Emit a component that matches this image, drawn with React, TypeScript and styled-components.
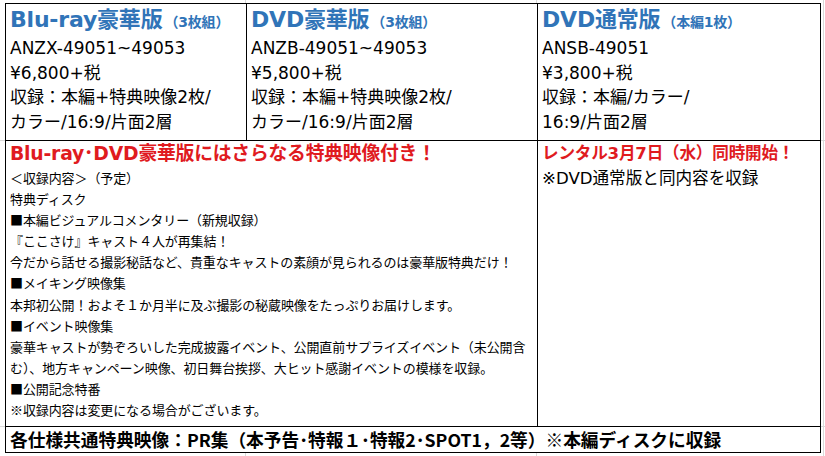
import React from 'react';
import styled, { createGlobalStyle } from 'styled-components';

const GlobalStyle = createGlobalStyle`
    html, body {
        margin: 0;
        padding: 0;
        background: #fff;
    }
`;

const grid = '#d9d9d9';

const Page = styled.div`
    width: 825px;
    height: 456px;
    box-sizing: border-box;
    padding: 3px 0 0 5px;
    overflow: hidden;
    background:
        linear-gradient(${grid}, ${grid}) 245px 0 / 1px 100% no-repeat,
        linear-gradient(${grid}, ${grid}) 536px 0 / 1px 100% no-repeat,
        linear-gradient(${grid}, ${grid}) 823px 0 / 1px 100% no-repeat,
        linear-gradient(${grid}, ${grid}) 0 140px / 100% 1px no-repeat,
        linear-gradient(${grid}, ${grid}) 0 426px / 100% 1px no-repeat,
        #fff;
`;

const Sheet = styled.div`
    display: grid;
    grid-template-columns: 240px 290px 282px;
    grid-template-rows: 136px 285px 25px;
    gap: 1px;
    width: 816px;
    padding: 1px;
    box-sizing: border-box;
    background: #000;
`;

const Cell = styled.div<{ $span?: number }>`
    grid-column: span ${(p) => p.$span ?? 1};
    background: #fff;
    padding: 0 4px;
    overflow: hidden;
    white-space: nowrap;
    color: #000;
`;

const EditionTitle = styled.div`
    height: 32px;
    line-height: 32px;
    font-family: "DejaVu Sans", "Noto Sans CJK JP", sans-serif;
    font-weight: bold;
    font-size: 22px;
    color: #3074b8;
    letter-spacing: -0.2px;
`;

const TitleNote = styled.span`
    font-size: 14px;
    margin-left: 2px;
`;

const SpecLine = styled.div`
    height: 24.5px;
    line-height: 24.5px;
    font-family: "DejaVu Sans", "Noto Sans CJK JP", sans-serif;
    font-size: 17px;
`;

const NoticeHeading = styled.div<{ $size: number }>`
    height: 26px;
    line-height: 26px;
    font-family: "DejaVu Sans", "Noto Sans CJK JP", sans-serif;
    font-weight: bold;
    font-size: ${(p) => p.$size}px;
    color: #e01b1f;
    letter-spacing: -0.2px;
`;

const DetailLine = styled.div`
    height: 21.1px;
    line-height: 21.1px;
    font-family: "Noto Sans CJK JP", sans-serif;
    font-size: 13px;
    letter-spacing: -0.1px;
`;

const RentalLine = styled.div`
    height: 24px;
    line-height: 24px;
    font-family: "DejaVu Sans", "Noto Sans CJK JP", sans-serif;
    font-size: 16.6px;
`;

const CommonNote = styled.div`
    height: 25px;
    line-height: 25px;
    font-family: "Noto Sans CJK JP", sans-serif;
    font-weight: bold;
    font-size: 17.7px;
`;

type Edition = {
    name: string;
    note: string;
    lines: string[];
};

const editions: Edition[] = [
    {
        name: 'Blu-ray豪華版',
        note: '（3枚組）',
        lines: ['ANZX-49051~49053', '¥6,800+税', '収録：本編+特典映像2枚/', 'カラー/16:9/片面2層'],
    },
    {
        name: 'DVD豪華版',
        note: '（3枚組）',
        lines: ['ANZB-49051~49053', '¥5,800+税', '収録：本編+特典映像2枚/', 'カラー/16:9/片面2層'],
    },
    {
        name: 'DVD通常版',
        note: '（本編1枚）',
        lines: ['ANSB-49051', '¥3,800+税', '収録：本編/カラー/', '16:9/片面2層'],
    },
];

const details = [
    '＜収録内容＞（予定）',
    '特典ディスク',
    '■本編ビジュアルコメンタリー（新規収録）',
    '『ここさけ』キャスト４人が再集結！',
    '今だから話せる撮影秘話など、貴重なキャストの素顔が見られるのは豪華版特典だけ！',
    '■メイキング映像集',
    '本邦初公開！およそ１か月半に及ぶ撮影の秘蔵映像をたっぷりお届けします。',
    '■イベント映像集',
    '豪華キャストが勢ぞろいした完成披露イベント、公開直前サプライズイベント（未公開含',
    'む）、地方キャンペーン映像、初日舞台挨拶、大ヒット感謝イベントの模様を収録。',
    '■公開記念特番',
    '※収録内容は変更になる場合がございます。',
];

const App: React.FC = () => {
    return (
        <Page>
            <GlobalStyle />
            <Sheet>
                {editions.map((ed) => (
                    <Cell key={ed.name}>
                        <EditionTitle>
                            {ed.name}
                            <TitleNote>{ed.note}</TitleNote>
                        </EditionTitle>
                        {ed.lines.map((line) => (
                            <SpecLine key={line}>{line}</SpecLine>
                        ))}
                    </Cell>
                ))}
                <Cell $span={2}>
                    <NoticeHeading $size={18.8}>Blu-ray･DVD豪華版にはさらなる特典映像付き！</NoticeHeading>
                    {details.map((line) => (
                        <DetailLine key={line}>{line}</DetailLine>
                    ))}
                </Cell>
                <Cell>
                    <NoticeHeading $size={16.6}>レンタル3月7日（水）同時開始！</NoticeHeading>
                    <RentalLine>※DVD通常版と同内容を収録</RentalLine>
                </Cell>
                <Cell $span={3}>
                    <CommonNote>各仕様共通特典映像：PR集（本予告･特報１･特報2･SPOT1，2等）※本編ディスクに収録</CommonNote>
                </Cell>
            </Sheet>
        </Page>
    );
};

export default App;
